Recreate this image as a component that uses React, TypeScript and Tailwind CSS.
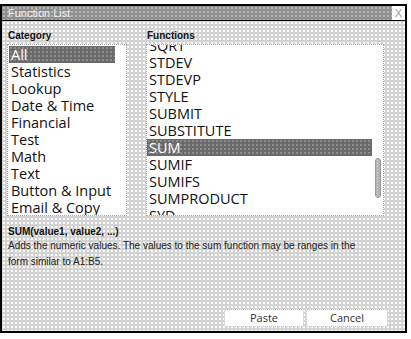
import React from 'react'

const categories = ['All', 'Statistics', 'Lookup', 'Date & Time', 'Financial', 'Test', 'Math', 'Text', 'Button & Input', 'Email & Copy']
const functions = ['SQRT', 'STDEV', 'STDEVP', 'STYLE', 'SUBMIT', 'SUBSTITUTE', 'SUM', 'SUMIF', 'SUMIFS', 'SUMPRODUCT', 'SYD', 'T']

const dotsLight = '[background-image:radial-gradient(circle,#ffffff_0.7px,transparent_0.9px)] [background-size:4px_4px] bg-[#d3d3d3]'
const dotsDark = '[background-image:radial-gradient(circle,#8c8c8c_0.7px,transparent_0.9px)] [background-size:4px_4px] bg-[#6a6a6a]'

type ListProps = {
    items: string[],
    selected: string,
    offset?: boolean,
    width: string,
}

const ListBox = ({ items, selected, offset, width }: ListProps) => (
    <div className={`relative h-[172px] overflow-hidden border border-dotted border-[#a8a8a8] bg-white ${width}`}>
        <ul className={`pr-[11px] ${offset ? '-mt-[8px]' : 'pt-px pl-px'}`}>
            {items.map((item) => (
                <li
                    key={item}
                    className={`h-[17px] whitespace-nowrap pl-[2px] text-[14.5px] leading-[17px] ${item === selected ? `${dotsDark} text-white` : 'text-[#111]'}`}
                >
                    {item}
                </li>
            ))}
        </ul>
        {offset &&
            <div className="absolute top-[113px] right-[2px] h-[40px] w-[6px] rounded-[3px] border border-[#9a9a9a] [background-image:radial-gradient(circle,#e0e0e0_0.7px,transparent_0.9px)] [background-size:3px_3px] bg-[#b4b4b4]" />
        }
    </div>
)

export default function App() {
    return (
        <div className="h-[339px] w-[411px] bg-white pt-1 font-['Liberation_Sans',Arial,sans-serif]">
            <div className="flex h-[329px] w-[407px] flex-col border-2 border-black">
                <div className="flex h-[15px] items-stretch border-b border-black">
                    <div className="flex flex-1 items-center pl-[6px] text-[11px] text-[#f0f0f0] [background-image:radial-gradient(circle,#b8b8b8_0.7px,transparent_0.9px)] [background-size:4px_4px] bg-[#8e8e8e]">
                        Function List
                    </div>
                    <div className="flex w-[13px] items-center justify-center bg-white text-[11px] font-light text-[#999]">X</div>
                </div>
                <div className={`flex flex-1 flex-col pt-[8px] pr-[17px] pb-[4px] pl-[5px] ${dotsLight}`}>
                    <div className="flex gap-[19px]">
                        <div>
                            <div className="pl-px text-[10px] leading-[13px] font-bold text-[#111]">Category</div>
                            <div className="mt-[2px] font-['Open_Sans',sans-serif]">
                                <ListBox items={categories} selected="All" width="w-[120px]" />
                            </div>
                        </div>
                        <div>
                            <div className="pl-px text-[10px] leading-[13px] font-bold text-[#111]">Functions</div>
                            <div className="mt-[2px] font-['Open_Sans',sans-serif]">
                                <ListBox items={functions} selected="SUM" offset width="w-[238px]" />
                            </div>
                        </div>
                    </div>
                    <div className="mt-[10px] pl-px text-[10px] leading-[12px] font-bold text-[#111]">SUM(value1, value2, ...)</div>
                    <p className="w-[368px] pl-px text-[10px] leading-[16px] text-[#222]">
                        Adds the numeric values. The values to the sum function may be ranges in the form similar to A1:B5.
                    </p>
                    <div className="mt-auto flex justify-end gap-[2px] font-['Open_Sans',sans-serif]">
                        <button className="h-[18px] w-[80px] rounded-[3px] border border-dotted border-[#b0b0b0] bg-white text-[11px] leading-[16px] text-[#333]">Paste</button>
                        <button className="h-[18px] w-[82px] rounded-[3px] border border-dotted border-[#b0b0b0] bg-white text-[11px] leading-[16px] text-[#333]">Cancel</button>
                    </div>
                </div>
            </div>
        </div>
    )
}
